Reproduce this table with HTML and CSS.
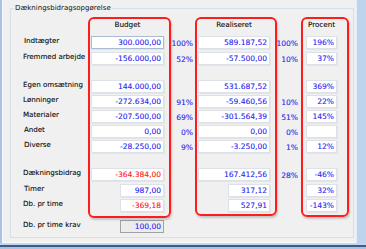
FILE: index.html
```
<!DOCTYPE html>
<html lang="da">
<head>
<meta charset="utf-8">
<title>Dækningsbidragsopgørelse</title>
<link rel="stylesheet" href="styles.css">
</head>
<body>
<div class="window">
  <div class="frame-left"></div>
  <div class="client">
    <fieldset class="group">
      <legend>Dækningsbidragsopgørelse</legend>
      <div class="rows">
        <div class="row head">
          <div class="hd hd-b">Budget</div>
          <div class="hd hd-r">Realiseret</div>
          <div class="hd hd-p">Procent</div>
        </div>
        <div class="row tall">
          <div class="lbl in1">Indtægter</div>
          <div class="fld b focus">300.000,00</div>
          <div class="pct b">100%</div>
          <div class="fld r">589.187,52</div>
          <div class="pct r">100%</div>
          <div class="fld p">196%</div>
        </div>
        <div class="row">
          <div class="lbl">Fremmed arbejde</div>
          <div class="fld b">-156.000,00</div>
          <div class="pct b">52%</div>
          <div class="fld r">-57.500,00</div>
          <div class="pct r">10%</div>
          <div class="fld p">37%</div>
        </div>
        <div class="row sep">
          <div class="lbl">Egen omsætning</div>
          <div class="fld b">144.000,00</div>
          <div class="fld r">531.687,52</div>
          <div class="fld p">369%</div>
        </div>
        <div class="row">
          <div class="lbl">Lønninger</div>
          <div class="fld b">-272.634,00</div>
          <div class="pct b">91%</div>
          <div class="fld r">-59.460,56</div>
          <div class="pct r">10%</div>
          <div class="fld p">22%</div>
        </div>
        <div class="row">
          <div class="lbl">Materialer</div>
          <div class="fld b">-207.500,00</div>
          <div class="pct b">69%</div>
          <div class="fld r">-301.564,39</div>
          <div class="pct r">51%</div>
          <div class="fld p">145%</div>
        </div>
        <div class="row">
          <div class="lbl in1">Andet</div>
          <div class="fld b">0,00</div>
          <div class="pct b">0%</div>
          <div class="fld r">0,00</div>
          <div class="pct r">0%</div>
          <div class="fld p"></div>
        </div>
        <div class="row">
          <div class="lbl in1">Diverse</div>
          <div class="fld b">-28.250,00</div>
          <div class="pct b">9%</div>
          <div class="fld r">-3.250,00</div>
          <div class="pct r">1%</div>
          <div class="fld p">12%</div>
        </div>
        <div class="row sep tall">
          <div class="lbl">Dækningsbidrag</div>
          <div class="fld b neg">-364.384,00</div>
          <div class="fld r">167.412,56</div>
          <div class="pct r">28%</div>
          <div class="fld p">-46%</div>
        </div>
        <div class="row">
          <div class="lbl in1">Timer</div>
          <div class="fld b short">987,00</div>
          <div class="fld r short">317,12</div>
          <div class="fld p">32%</div>
        </div>
        <div class="row">
          <div class="lbl">Db. pr time</div>
          <div class="fld b short neg">-369,18</div>
          <div class="fld r short">527,91</div>
          <div class="fld p">-143%</div>
        </div>
        <div class="row gap-krav">
          <div class="lbl">Db. pr time krav</div>
          <div class="fld b short krav">100,00</div>
        </div>
      </div>
    </fieldset>
  </div>
  <div class="frame-right"></div>
  <div class="frame-bottom"></div>
  <div class="mark mark-budget"></div>
  <div class="mark mark-real"></div>
  <div class="mark mark-pct"></div>
</div>
</body>
</html>
```
FILE: styles.css
```
html, body {
  margin: 0;
  background: #f0f0f0;
  font-family: "DejaVu Sans", "Liberation Sans", sans-serif;
}

.window {
  position: relative;
  width: 366px;
  height: 249px;
  display: grid;
  grid-template-columns: 3px 1fr 10px;
  grid-template-rows: 243px 6px;
  overflow: hidden;
}

.frame-left {
  background: #a9c2df;
  border-right: 1px solid #f6f8fb;
}

.client {
  box-sizing: border-box;
  padding: 3px 2px 0 7px;
  border-bottom: 1px solid #fbfbfb;
}

.frame-right {
  background: #bed4ec;
  border-left: 1px solid #e4ecf5;
}

.frame-bottom {
  grid-column: 1 / -1;
  background: linear-gradient(#c2d7ee 0 2px, #3d5d88 2px 4px, #a8c2e0 4px);
}

.group {
  margin: 0;
  padding: 0;
  min-width: 0;
  height: 235px;
  box-sizing: border-box;
  border: 1px solid #d5dfe5;
}

.group legend {
  margin-left: 3px;
  padding: 0 1px;
  font-size: 7px;
  line-height: 10px;
  color: #111;
}

.rows {
  display: flex;
  flex-direction: column;
  padding-left: 12px;
}

.row {
  display: grid;
  grid-template-columns: 68px 73px 29px 5px 72px 28px 8px 31px;
  height: 15px;
  align-items: start;
}

.row.tall { height: 16px; }
.row.head { height: 23px; align-items: center; }
.row.sep { margin-top: 13px; }
.row.gap-krav { margin-top: 6px; }

.lbl {
  grid-column: 1;
  font-size: 7.05px;
  line-height: 9px;
  color: #111;
  white-space: nowrap;
  text-shadow: 0.15px 0 0 rgba(17, 17, 17, 0.4);
}

.lbl.in1 { padding-left: 1px; }

.hd {
  font-size: 7.2px;
  line-height: 10px;
  text-align: center;
  color: #111;
  text-shadow: 0.15px 0 0 rgba(17, 17, 17, 0.4);
}

.hd-b { grid-column: 2; }
.hd-r { grid-column: 5; }
.hd-p { grid-column: 8; }

.fld {
  height: 13px;
  box-sizing: border-box;
  border: 1px solid #dde2e8;
  background: #fff;
  box-shadow: 1px 1px 0 #e4e4e4;
  padding-right: 2px;
  font-size: 7.5px;
  line-height: 11px;
  text-align: right;
  color: #2e2ef2;
  white-space: nowrap;
  text-shadow: 0.15px 0 0 rgba(46, 46, 242, 0.4);
}

.fld.b { grid-column: 2; }
.fld.r { grid-column: 5; }
.fld.p { grid-column: 8; }

.fld.b.short { width: 44px; justify-self: end; }
.fld.r.short { width: 42px; justify-self: end; }

.fld.focus { border-color: #a9bcd3; }

.fld.krav {
  border-color: #a2a2a2;
  background: #ececec;
  box-shadow: none;
}

.fld.neg {
  color: #ff2424;
  text-shadow: 0.15px 0 0 rgba(255, 36, 36, 0.4);
}

.pct {
  padding-top: 1px;
  font-size: 7.5px;
  line-height: 13px;
  text-align: right;
  color: #2e2ef2;
  text-shadow: 0.15px 0 0 rgba(46, 46, 242, 0.4);
}

.pct.b { grid-column: 3; }
.pct.r { grid-column: 6; }

.mark {
  position: absolute;
  box-sizing: border-box;
  border: 2px solid #ff1c1c;
  border-radius: 6px;
  box-shadow: 1px 2px 2px rgba(0, 0, 0, 0.18);
}

.mark-budget { left: 88px; top: 17px; width: 83px; height: 201px; }
.mark-real { left: 195px; top: 17px; width: 82px; height: 199px; }
.mark-pct { left: 301px; top: 17px; width: 48px; height: 200px; }
```
